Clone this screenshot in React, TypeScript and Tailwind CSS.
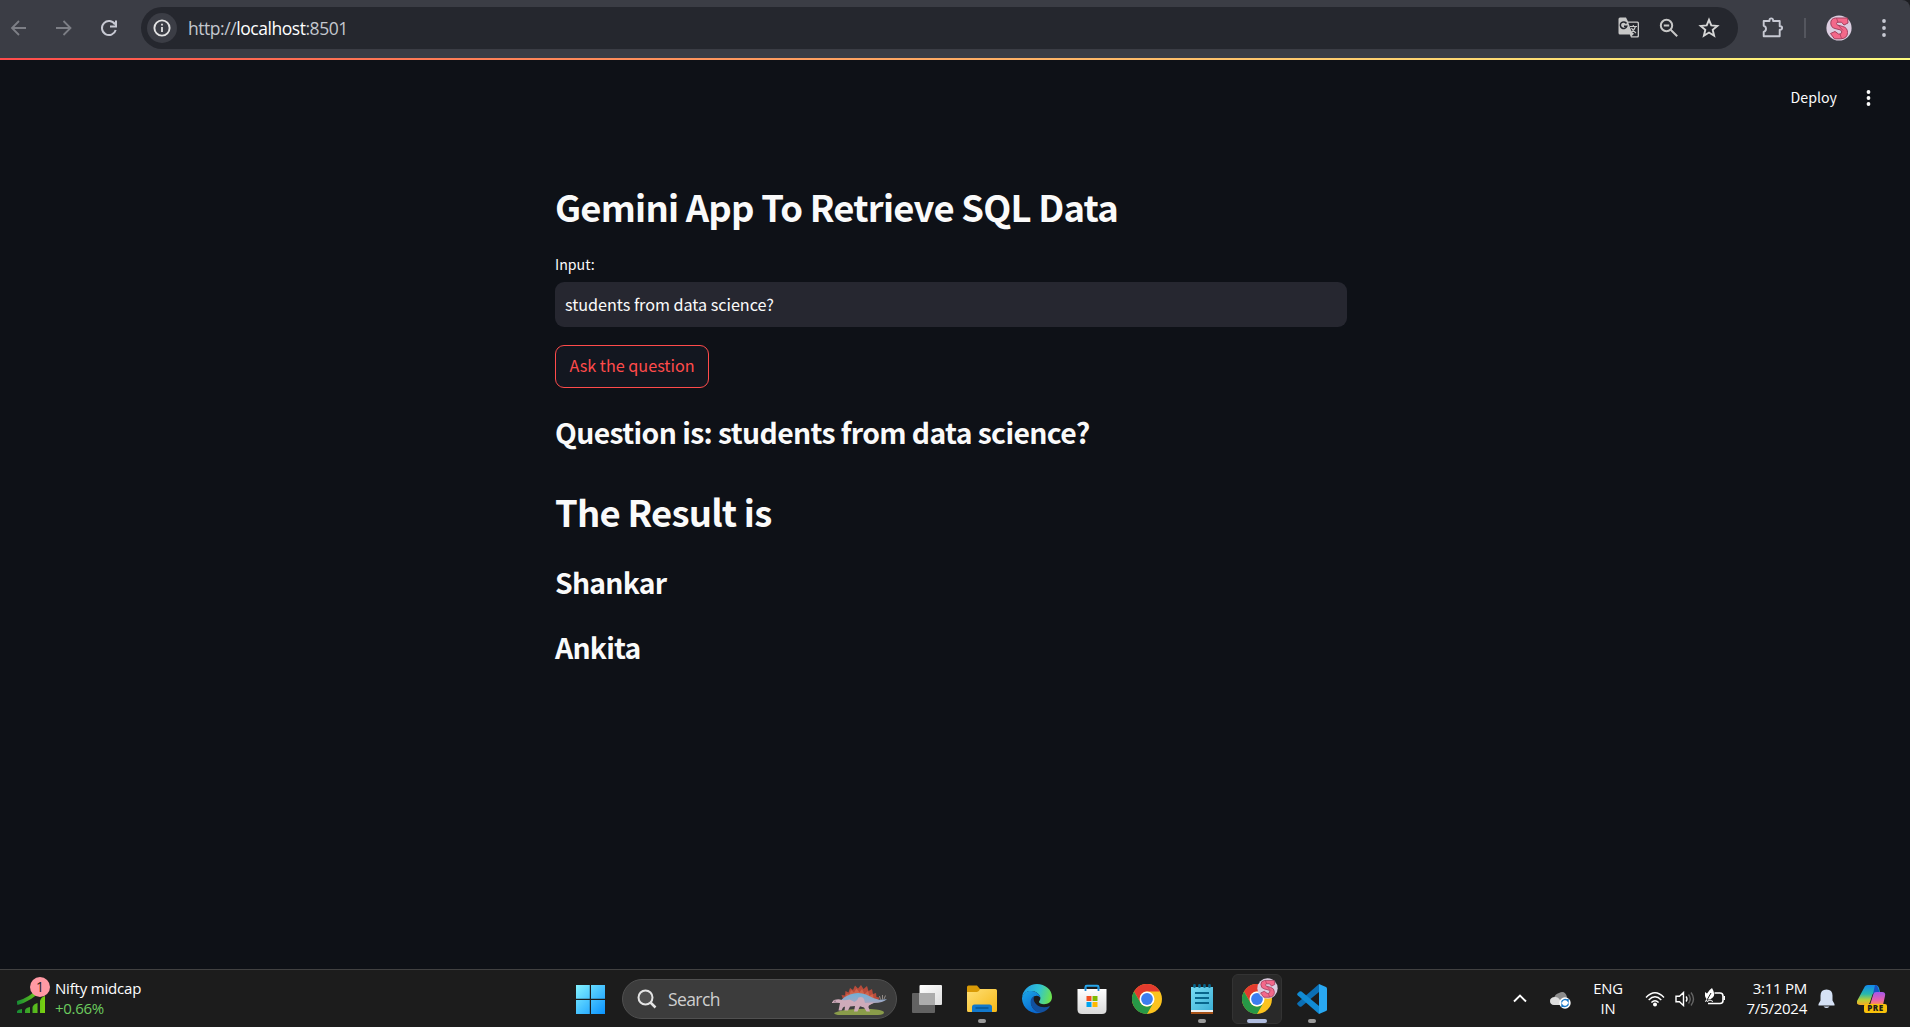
import React from "react";

const UI = "font-['Open_Sans','Noto_Sans',sans-serif]";
const APP = "font-['Noto_Sans_CJK_SC',sans-serif]";

function Monogram({ size }: { size: number }) {
  return (
    <svg width={size} height={size} viewBox="0 0 26 26">
      <circle cx="13" cy="13" r="12.600" fill="#dccde0" />
      <path d="M21.500 3H9.500Q4.800 3.500 4.800 8t4.200 5.500l5 1.300q1.800.6 1.800 2.200T14 19h-1.500L9 16.500 4.500 18.500 8.500 23.800H15q6.500-.5 6.500-6.300 0-4.800-4.700-6l-5-1.400q-1.300-.5-1.300-1.600T12 7.200h3.500L18 10l4-2Z" fill="#f4688a" stroke="#a3405e" strokeWidth="1" />
      <path d="M10.500 3.200 12 7.200M12 10l5 5.500M14 19l1.500 4.500" stroke="#a3405e" strokeWidth=".8" />
    </svg>
  );
}

function BrowserBar() {
  return (
    <header className="flex h-[58px] shrink-0 items-start rounded-tr-lg bg-[#3b3d45]">
      <div className="flex h-14 w-[141px] shrink-0 items-center pl-[10px]">
        <svg width="18" height="18" viewBox="0 0 18 18" fill="none" stroke="#7d7f86" strokeWidth="1.8"><path d="M16 9H2.500M9 2 2 9l7 7" /></svg>
        <svg className="ml-[27px]" width="18" height="18" viewBox="0 0 18 18" fill="none" stroke="#7d7f86" strokeWidth="1.8"><path d="M1 9h14.500M8.500 2l7 7-7 7" /></svg>
        <svg className="ml-[27px]" width="18" height="18" viewBox="0 0 18 18" fill="none" stroke="#c7c9d3" strokeWidth="2"><path d="M15 5.500A7 7 0 1 0 15.700 11" /><path d="M16 1.500v6h-6" /></svg>
      </div>
      <div className="mt-[7px] flex h-[42px] w-[1597px] shrink-0 items-center rounded-full bg-[#25272e] pl-1.5">
        <div className="flex size-[30px] items-center justify-center rounded-full bg-[#3b3d45]">
          <svg width="18" height="18" viewBox="0 0 18 18"><circle cx="9" cy="9" r="7.600" fill="none" stroke="#e3e3e3" strokeWidth="1.900" /><path d="M8.100 8h1.800v5H8.100zM8.100 4.800h1.800v1.800H8.100z" fill="#e3e3e3" /></svg>
        </div>
        <p className={`${UI} ml-[11px] pt-px text-[17.500px] tracking-[-0.450px] text-[#c4c7cf]`}>http://<span className="text-white">localhost</span>:8501</p>
        <div className="ml-auto flex items-center pr-[18px]">
          <svg width="22" height="22" viewBox="0 0 22 22">
            <path d="M2 .5h6l2 4h9.500q1.500 0 1.500 1.500v13q0 1.500-1.500 1.500H13l-1.200-3H2Q.5 17.500.5 16V2Q.5.5 2 .5Z" fill="#c7c7c7" />
            <path d="M10.300 5.800h8.700q.7 0 .7.700v12q0 .7-.7.700h-5.500l2.500-2.500-2.300-2Z" fill="#25272e" />
            <path d="M8.500 6.500A3.300 3.300 0 1 0 8.800 9.200H6" fill="none" stroke="#25272e" strokeWidth="1.500" />
            <path d="M12 9.500h7M15.300 8v1.500M17.500 9.500q-1.200 4-4.500 6M13.500 11q1.500 3 4.500 5" fill="none" stroke="#c7c7c7" strokeWidth="1.200" />
          </svg>
          <svg className="ml-[19px]" width="20" height="20" viewBox="0 0 20 20" fill="none" stroke="#c7c7c7" strokeWidth="2"><circle cx="7.500" cy="7.500" r="5.700" /><path d="m11.700 11.700 6.500 6.500M4.800 7.500h5.400" /></svg>
          <svg className="ml-[19px]" width="22" height="22" viewBox="0 0 22 22" fill="none" stroke="#d6d6d6" strokeWidth="1.900"><path d="m11 2.800 2.300 5.600 6 .5-4.600 3.900 1.400 5.900L11 15.500l-5.100 3.200 1.400-5.900-4.600-3.900 6-.5Z" /></svg>
        </div>
      </div>
      <div className="flex h-14 flex-1 items-center pl-6">
        <svg width="22" height="22" viewBox="0 0 22 22"><path d="M1.700 4h5.800V3.200a1.800 1.800 0 0 1 3.600 0V4h6.600v5.200h.6a1.800 1.800 0 0 1 0 3.600h-.6v6.500H1.700v-4.500a3.100 3.100 0 0 0 0-6Z" fill="none" stroke="#c7c9d3" strokeWidth="1.900" strokeLinejoin="round" /></svg>
        <div className="ml-[20px] h-5 w-0.5 bg-[#54565e]" />
        <div className="ml-5"><Monogram size={26} /></div>
        <svg className="ml-[30px]" width="4" height="18" viewBox="0 0 4 18" fill="#c7c9d3"><circle cx="2" cy="2" r="1.900" /><circle cx="2" cy="9" r="1.900" /><circle cx="2" cy="16" r="1.900" /></svg>
      </div>
    </header>
  );
}

function AppPage() {
  return (
    <main className={`${APP} flex-1 bg-[#0e1117] text-[#fafafa]`}>
      <div className="h-0.5 bg-linear-to-r from-[#ff4b4b] to-[#fffd80]" />
      <div className="flex h-[76px] items-center justify-end pr-[39px]">
        <span className="text-[14.200px]">Deploy</span>
        <svg className="ml-[29px]" width="5" height="16" viewBox="0 0 5 16" fill="#fafafa"><circle cx="2.500" cy="2" r="1.900" /><circle cx="2.500" cy="8" r="1.900" /><circle cx="2.500" cy="14" r="1.900" /></svg>
      </div>
      <section className="ml-[555px] flex w-[792px] flex-col items-start pt-[46px]">
        <h1 className="h-12 text-[36.450px]/[48px] font-bold tracking-[-0.780px]">Gemini App To Retrieve SQL Data</h1>
        <label className="mt-[22px] h-6 text-[14.200px]/[24px]">Input:</label>
        <div className="mt-[6px] flex h-[45px] w-full items-center rounded-[9px] bg-[#262730] px-[10px] text-[16.200px] tracking-[-0.030px]">students from data science?</div>
        <button className="mt-[18px] flex h-[43px] w-[154px] items-center justify-center rounded-[9px] border border-[#ff4b4b] bg-[#131720] pb-0.5 text-[16.200px] text-[#ff4b4b]">Ask the question</button>
        <h2 className="mt-[25px] h-[38px] text-[28.350px]/[38px] font-bold tracking-[-0.610px]">Question is: students from data science?</h2>
        <h1 className="mt-[36px] h-12 text-[36.450px]/[48px] font-bold tracking-[-0.780px]">The Result is</h1>
        <h2 className="mt-[28px] h-[38px] text-[28.350px]/[38px] font-bold tracking-[-0.750px]">Shankar</h2>
        <h2 className="mt-[27px] h-[38px] text-[28.350px]/[38px] font-bold tracking-[-0.750px]">Ankita</h2>
      </section>
    </main>
  );
}

function Dinosaur() {
  return (
    <svg width="57" height="32" viewBox="0 0 57 32">
      <defs><linearGradient id="dino" x1="0" y1="0" x2="0" y2="1"><stop offset="0" stopColor="#6fb0d8" /><stop offset=".55" stopColor="#93a9c8" /><stop offset="1" stopColor="#c49db0" /></linearGradient></defs>
      <path d="M2 29q6-3 16-3.500 16-1.500 26 0 8 1 8 3t-6 2.500H8Q3 31 2 29Z" fill="#8a9c4a" />
      <path d="m11 15-1.500-4 3.500.5.500-4.500 3 1.500L18 4l3 2 2-4.500 3 3L29 1l2.500 4L35 2l1.500 5L40 5l1 5 3-1 .5 4 3 .5L46 17Z" fill="#b84c3b" />
      <path d="m14 14 .5-4 3 .5 1.500-4.500 3 2.500 2.500-4 3 4L30 5l2.500 5L36 7l1.500 5 3-2 1.500 5Z" fill="#d0644b" />
      <path d="M8 17q5-5 10-6.500 8-3 16 0 7 4 13 5.200l8-.4q-4 3.700-13 3.700l-8 3-16-1-10-1Z" fill="url(#dino)" />
      <path d="M.5 18q.5-2.500 4-2.500 3-.5 5 .5 5 .5 8-.5 3 1 5 2.500 3-1 4-4.500 4-1.500 5.500 1.500l1 4 9-.5-5 3q-1 1.500 0 3l1 3h-3.500l-2.500-4-4-1.200-2.500 5.200h-3.500l1-5.500-5 .5-2 4h-3.500l.5-4-2 1-1.500 3h-3l1.500-7.500q-4-.5-8 0-2 0-2-1Z" fill="#cfabba" />
      <path d="M2.500 17.200h1" stroke="#503c4b" />
      <path d="m48.500 15.500-1-3.500M50.500 15.500V11M52 15l1.500-3.500" stroke="#a9a09b" strokeWidth=".8" />
    </svg>
  );
}

function ChromeLogo() {
  return (
    <svg width="30" height="30" viewBox="0 0 30 30">
      <circle cx="15" cy="15" r="15" fill="#fcc31e" />
      <path d="M2 7.500A15 15 0 0 1 28 7.500H15a7.500 7.500 0 0 0-6.500 3.800v7.500Z" fill="#e33b2e" />
      <path d="M2 7.500A15 15 0 0 0 15 30l6.500-11.300a7.500 7.500 0 0 1-13 0Z" fill="#279847" />
      <circle cx="15" cy="15" r="7.500" fill="#fff" /><circle cx="15" cy="15" r="5.900" fill="#3c7ef0" />
    </svg>
  );
}

function TaskSlot({ children, mark }: { children: React.ReactNode; mark?: boolean }) {
  return (
    <div className="relative flex h-full w-[55px] items-center justify-center">
      {children}
      {mark && <span className="absolute bottom-[4px] h-1 w-2 rounded-full bg-[#9a9a9a]" />}
    </div>
  );
}

function Taskbar() {
  return (
    <footer className={`${UI} flex h-[58px] shrink-0 items-center border-t border-[#414141] bg-[#1c1c1c] text-white`}>
      <div className="flex h-full w-[575px] items-center pl-[17px]">
        <div className="relative h-9 w-8">
          <svg className="absolute -top-px" width="30" height="34" viewBox="0 0 30 34">
            <defs><linearGradient id="bars"><stop stopColor="#168a35" /><stop offset="1" stopColor="#7bd210" /></linearGradient></defs>
            <path d="M0 23Q13 20 24 8" fill="none" stroke="url(#bars)" strokeWidth="4" />
            <path d="M0 33v-2q1-1.500 5-2v4ZM8 33v-3q1-2.500 5-3v6ZM15.500 33v-6q1-3 5-4v10ZM23 33V21q1-4 5-5v17Z" fill="url(#bars)" />
          </svg>
          <span className="absolute -top-[4px] left-[13px] flex size-5 items-center justify-center rounded-full bg-[#ff99a4] text-[14px] text-[#1c1c1c]">1</span>
        </div>
        <div className="ml-1.5 pb-px text-[15px]/[20px] tracking-[-0.180px]"><p>Nifty midcap</p><p className="tracking-[-0.300px] text-[#6ccb5f]">+0.66%</p></div>
      </div>
      <svg width="30" height="30" viewBox="0 0 30 30"><defs><linearGradient id="win" x1="0" y1="0" x2="1" y2="1"><stop stopColor="#84f3ff" /><stop offset="1" stopColor="#0a93ff" /></linearGradient></defs><path d="M1 1h13.800v13.800H1ZM16 1h14v13.800H16ZM1 16h13.800v14H1ZM16 16h14v14H16Z" fill="url(#win)" /></svg>
      <div className="ml-[17px] flex h-10 w-[275px] items-center rounded-full border border-[#505050] bg-[#3c3c3c] pl-3.5 pr-[7px]">
        <svg width="20" height="20" viewBox="0 0 20 20" fill="none" stroke="#e4e4e4" strokeWidth="2"><circle cx="8.500" cy="8.500" r="7" fill="#505050" /><path d="m13.500 13.500 5 5" strokeWidth="2.500" /></svg>
        <span className="ml-[11px] pt-0.5 text-[17.500px] tracking-[-0.600px] text-[#cfcfcf]">Search</span>
        <span className="ml-auto pt-0.5"><Dinosaur /></span>
      </div>
      <div className="ml-[2.500px] flex h-full">
        <TaskSlot>
          <svg width="30" height="30" viewBox="0 0 30 30"><defs><linearGradient id="tv" x1="0" x2="1" y2="1"><stop stopColor="#fff" /><stop offset="1" stopColor="#ddd" /></linearGradient></defs><rect y="9" width="23" height="20" rx="1" fill="#626262" /><rect x="7.500" y="1" width="22.500" height="20" rx="1" fill="url(#tv)" /><path d="M7.500 9H23v12H7.500Z" fill="#acacac" /></svg>
        </TaskSlot>
        <TaskSlot mark>
          <svg width="30" height="30" viewBox="0 0 30 30"><defs><linearGradient id="fold" x1="0" x2="1" y1="0" y2="1"><stop stopColor="#ffdf75" /><stop offset="1" stopColor="#f5b817" /></linearGradient></defs><path d="M0 3q0-1.500 1.500-1.500H10L13 5h10v4H0Z" fill="#d99a06" /><path d="M0 8h10q2 0 3-3h15.500q1.500 0 1.500 1.500v20q0 1.500-1.500 1.500h-27Q0 28 0 26.500Z" fill="url(#fold)" /><path d="M5 28v-5q0-2.500 2.500-2.500h15q2.500 0 2.500 2.500v5Z" fill="#1279cc" /><path d="M8.500 24h13" stroke="#075089" strokeWidth="1.300" /></svg>
        </TaskSlot>
        <TaskSlot>
          <svg width="30" height="30" viewBox="0 0 30 30"><defs><linearGradient id="eg" x1="0" y1=".3" x2="1" y2=".5"><stop stopColor="#209ce8" /><stop offset=".55" stopColor="#31c4d2" /><stop offset="1" stopColor="#6ce34e" /></linearGradient><linearGradient id="eb" x1="0" y1="0" x2=".6" y2="1"><stop stopColor="#1aa7e8" /><stop offset="1" stopColor="#0a67ce" /></linearGradient></defs>
            <path d="M0 14A15 15 0 0 1 15 0c8 0 15 5.500 15 13 0 5-4 7.200-8 7.200-3 0-5-1.200-5-2.200s1.400-1.500 1.400-4C18.400 10.500 14 7 9 7 4 7 1 10 0 14Z" fill="url(#eg)" />
            <path d="M0 14C1 9 5 6.500 9.500 7c5 .5 8.900 3.500 8.900 7-1.500-3-6-3-8 0-4 6 1 14 9 14.500A15 15 0 0 1 0 15Z" fill="url(#eb)" />
            <path d="M12 12.500c-3 1-4 4.500-3 8 1.400 5 6 8.500 10.500 8 4-1 7-3.500 8.500-6.500-5 2-9.500 1.500-13-1-3-2.500-4-5.500-3-8.500Z" fill="#12509e" /></svg>
        </TaskSlot>
        <TaskSlot>
          <svg width="30" height="30" viewBox="0 0 30 30"><defs><linearGradient id="bag" x2="0" y2="1"><stop stopColor="#fff" /><stop offset="1" stopColor="#d9d9d9" /></linearGradient></defs><path d="M8.500 6V3q0-1.200 1.200-1.200h10.600q1.200 0 1.200 1.200v3" fill="none" stroke="#27a7ed" strokeWidth="2" /><path d="M.5 5h29v20.500q0 4.500-4.500 4.500H5Q.5 30 .5 25.500Z" fill="url(#bag)" /><path d="M9.500 12h5v5h-5z" fill="#f25022" /><path d="M15.500 12h5v5h-5z" fill="#7fba00" /><path d="M9.500 18h5v5h-5z" fill="#00a4ef" /><path d="M15.500 18h5v5h-5z" fill="#ffb900" /><path d="M8.500 3.500V7M21.500 3.500V7" stroke="#1a86cf" strokeWidth="1.800" /></svg>
        </TaskSlot>
        <TaskSlot><ChromeLogo /></TaskSlot>
        <TaskSlot mark>
          <svg width="22" height="30" viewBox="0 0 22 30"><defs><linearGradient id="note" x2="1" y2="1"><stop stopColor="#78dcf3" /><stop offset="1" stopColor="#3db0d6" /></linearGradient></defs><path d="M0 27h22v3H0z" fill="#a65218" /><path d="M0 25h22v3H0z" fill="#f0f0f0" /><path d="M0 3h22v23H0z" fill="url(#note)" /><path d="M4 9h14M4 14h14M4 19h14" stroke="#08668c" strokeWidth="2" /><path d="M3.500 1.500v1M8.500 1.500v1M13.500 1.500v1M18.500 1.500v1" stroke="#08668c" strokeWidth="2.800" strokeLinecap="round" /></svg>
        </TaskSlot>
        <div className="flex w-[55px] items-center justify-center">
          <div className="relative flex h-[50px] w-[50px] items-center justify-center rounded-md border border-[#333] bg-[#292929]">
            <ChromeLogo />
            <span className="absolute top-[3px] right-[3px]"><Monogram size={21} /></span>
            <span className="absolute bottom-0 h-1 w-5 rounded-full bg-[#b0bde0]" />
          </div>
        </div>
        <TaskSlot mark>
          <svg width="30" height="30" viewBox="0 0 30 30"><path d="M22 0v8L4.500 22.500q-1 .7-2 0L.6 20.800q-1-1 0-2Z" fill="#0b6fb5" /><path d="M22 30v-8L4.500 7.500q-1-.7-2 0L.6 9.200q-1 1 0 2Z" fill="#118bd4" /><path d="M22 0l7 3q1 .5 1 1.500v21q0 1-1 1.500l-7 3Z" fill="#29a8f2" /></svg>
        </TaskSlot>
      </div>
      <div className="ml-auto flex h-full w-[397px] shrink-0 items-center">
        <svg width="14" height="9" viewBox="0 0 14 9" fill="none" stroke="#fff" strokeWidth="1.900"><path d="m1 7.500 6-6 6 6" /></svg>
        <svg className="mt-0.5 ml-[23px]" width="21" height="18" viewBox="0 0 21 18"><path d="M4 7q1-4 5-5 6-3 8 4l-2 7H4Z" fill="#8c8c8c" /><path d="M4 14q-4-.3-4-4t5-4q3-.5 5 3l3 5Z" fill="#ddd" /><circle cx="15" cy="12" r="5.700" fill="#fff" /><path d="M11.500 11.500a3.600 3.600 0 0 1 6.500-1.500v-2M18.500 12.500a3.600 3.600 0 0 1-6.500 1.500v2" fill="none" stroke="#1878c8" strokeWidth="1.400" /></svg>
        <div className="ml-[22px] w-[30px] pb-px text-center text-[14.800px]/[20px] tracking-[-0.200px]"><p>ENG</p><p>IN</p></div>
        <svg className="ml-[22px]" width="20" height="16" viewBox="0 0 20 16" fill="none" stroke="#fff" strokeWidth="1.400"><path d="M1 6.500q9-9.500 18 0M3.700 9q6.300-6.500 12.600 0M6.400 11.500q3.600-3.500 7.200 0" /><circle cx="10" cy="13.500" r="1.300" fill="#fff" /></svg>
        <svg className="ml-[10px]" width="20" height="16" viewBox="0 0 20 16" fill="none" stroke="#fff" strokeWidth="1.400"><path d="M1 5.300h3.500L8.500 1.500v13L4.500 10.700H1ZM11 5.500q2 2.500 0 5" /><path d="M13.500 3.500q3.500 4.500 0 9M16 1.500q5 6.500 0 13" stroke="#666" /></svg>
        <svg className="mb-1 ml-[10px]" width="20" height="18" viewBox="0 0 20 18"><path d="M9.500 5H15q3 0 3 3v4.500q0 3-3 3H3" fill="none" stroke="#fff" strokeWidth="1.600" /><path d="M18.500 8H20v4h-1.500z" fill="#fff" /><path d="M7 0q4 6.500.8 9.500Q5.500 12 2.500 11.500L1 14l-1-.5L1.500 11Q-1 7.500 0 4l2 1.500Q4 2 7 0Z" fill="#fff" /><path d="m2 12 4-7" stroke="#1c1c1c" /><path d="M2 13.500q3-3 6 0" fill="none" stroke="#fff" /></svg>
        <div className="ml-[12px] w-[70px] pb-px text-right text-[15px]/[20px] tracking-[-0.250px]"><p>3:11 PM</p><p>7/5/2024</p></div>
        <svg className="ml-[11px]" width="17" height="20" viewBox="0 0 17 20"><path d="M8.500.500q6 0 6 6v5l2 3.500v1.500H.5V15l2-3.500v-5q0-6 6-6ZM5.500 17.500h6q-3 3-6 0Z" fill="#d5e1f5" /></svg>
        <div className="relative ml-[22px] size-[30px]">
          <svg width="30" height="30" viewBox="0 0 30 30"><defs><linearGradient id="cl" x2="0" y2="1"><stop stopColor="#1289ee" /><stop offset=".45" stopColor="#27b8ac" /><stop offset=".75" stopColor="#b9cf35" /><stop offset="1" stopColor="#f7a927" /></linearGradient><linearGradient id="cr" x2="0" y2="1"><stop stopColor="#a457eb" /><stop offset=".6" stopColor="#e75faf" /><stop offset="1" stopColor="#ff944f" /></linearGradient></defs><path d="M17 8h8q4 0 3 4l-2 9H13Z" fill="url(#cr)" /><path d="M7 4q1-3 4-3h7q3 0 4 3l1 4h-4q-3 0-4 4l-2 6q-1 3-4 3H3q-4 0-3-4Z" fill="url(#cl)" /><path d="m18 1 2 .5 2.500 6.500H19q-2 0-3 2Z" fill="#1752c4" /></svg>
          <span className="absolute top-[20px] left-[7px] flex h-[9px] w-[23px] items-center justify-center rounded-[2px] bg-[#f8c10b] text-[8px] font-extrabold tracking-[0.500px] text-[#1c1c1c]">PRE</span>
        </div>
      </div>
    </footer>
  );
}

export default function App() {
  return (
    <div className="flex h-[1027px] w-[1910px] flex-col overflow-hidden bg-[#1c1d21]">
      <BrowserBar />
      <AppPage />
      <Taskbar />
    </div>
  );
}
